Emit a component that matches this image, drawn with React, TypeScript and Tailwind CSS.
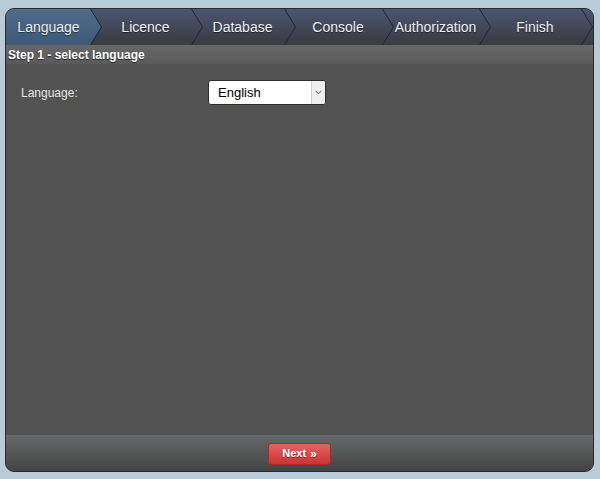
const tabs = [
  { label: 'Language', w: 'w-[85px]', active: true },
  { label: 'Licence', w: 'w-[101px]' },
  { label: 'Database', w: 'w-[93px]' },
  { label: 'Console', w: 'w-[98px]' },
  { label: 'Authorization', w: 'w-[97px]' },
  { label: 'Finish', w: 'w-[102px]' },
];

function Chevron({ active }: { active?: boolean }) {
  return (
    <svg
      className="absolute top-0 right-[-12px] z-10 h-[36px] w-[13px]"
      viewBox="0 0 13 36"
      preserveAspectRatio="none"
    >
      <defs>
        <linearGradient id="activeTab" x1="0" y1="0" x2="0" y2="1">
          <stop offset="0" stopColor="#4f6a8a" />
          <stop offset="1" stopColor="#3f5a78" />
        </linearGradient>
      </defs>
      {active && <polygon points="0,0 11.5,18 0,36" fill="url(#activeTab)" />}
      <polyline points="0.5,0 11.5,18 0.5,36" fill="none" stroke="#1d2538" strokeWidth="1" />
    </svg>
  );
}

export default function App() {
  return (
    <div className="min-h-[479px] w-[600px] bg-[#b9cbd6] pt-[8px] pl-[5px] font-['Liberation_Sans',Arial,sans-serif]">
      <div className="flex h-[464px] w-[589px] flex-col overflow-hidden rounded-[9px] border border-[#2a2a2a] bg-[#525252]">
        {/* wizard steps */}
        <div className="flex h-[36px] shrink-0 bg-gradient-to-b from-[#4a5571] to-[#3a3b3f]">
          {tabs.map((t, i) => (
            <div
              key={t.label}
              className={`relative flex items-center justify-center pt-[1px] ${t.w} ${i > 0 ? 'pl-2' : ''} ${
                t.active ? 'bg-gradient-to-b from-[#4f6a8a] to-[#3f5a78]' : ''
              }`}
            >
              <span className="text-[14px] text-[#eef0f4] [text-shadow:0_1px_1px_rgba(0,0,0,0.5)]">{t.label}</span>
              <Chevron active={t.active} />
            </div>
          ))}
        </div>

        <div className="flex h-[19px] shrink-0 items-center bg-gradient-to-b from-[#686868] to-[#5a5a5a] pl-[2px]">
          <span className="text-[12px] font-bold text-white [text-shadow:0_1px_1px_rgba(0,0,0,0.6)]">
            Step 1 - select language
          </span>
        </div>

        <div className="flex-1 px-[15px] pt-[16px]">
          <div className="flex items-center">
            <label className="w-[187px] text-[12px] text-[#e4e4e4]">Language:</label>
            <div className="flex h-[25px] w-[118px] items-stretch overflow-hidden rounded-[3px] border border-[#2e2e2e] bg-white">
              <span className="flex flex-1 items-center pl-[9px] text-[13px] text-black">English</span>
              <span className="flex w-[14px] items-center justify-center border-l border-[#d0d0d0] bg-[#eeeeee]">
                <svg width="7" height="5" viewBox="0 0 7 5">
                  <polyline points="0.5,0.8 3.5,3.8 6.5,0.8" fill="none" stroke="#666" strokeWidth="1" />
                </svg>
              </span>
            </div>
          </div>
        </div>

        <div className="flex h-[36px] shrink-0 items-center justify-center bg-gradient-to-b from-[#676869] to-[#444444] pt-[1px]">
          <button className="flex h-[22px] w-[63px] items-center justify-center gap-[4px] rounded-[3px] border border-[#a82a2a] bg-gradient-to-b from-[#e36363] to-[#c93333] text-[11px] font-bold text-white [text-shadow:0_1px_1px_rgba(0,0,0,0.4)]">
            Next <span className="text-[12px]">»</span>
          </button>
        </div>
      </div>
    </div>
  );
}
